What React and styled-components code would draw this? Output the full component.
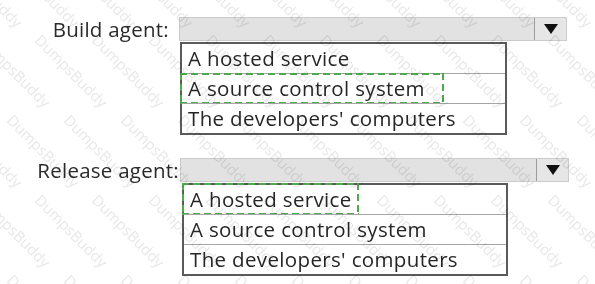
import * as React from 'react'
import styled, { createGlobalStyle } from 'styled-components'

const GlobalStyle = createGlobalStyle`
  html, body {
    margin: 0;
    padding: 0;
    background: #ffffff;
  }
  body {
    font-family: 'Open Sans', 'Noto Sans', sans-serif;
    color: #262626;
  }
`

const Page = styled.div`
  position: relative;
  width: 595px;
  height: 284px;
  overflow: hidden;
  background: #fff;
`

const Section = styled.div`
  display: flex;
  flex-direction: column;
  padding-top: ${p => p.top}px;
`

const Header = styled.div`
  display: flex;
  align-items: center;
  height: 24px;
`

const Label = styled.div`
  width: ${p => p.width}px;
  box-sizing: border-box;
  padding-right: ${p => p.gap}px;
  text-align: right;
  font-size: 20.5px;
  line-height: 24px;
  letter-spacing: 0.25px;
  color: #2a2a2a;
  white-space: nowrap;
`

const Bar = styled.div`
  display: flex;
  width: ${p => p.width}px;
  height: 24px;
  box-sizing: border-box;
  background: #e2e2e2;
  border: 1px solid #cbcbcb;
`

const BarFill = styled.div`
  flex: 1;
`

const ArrowButton = styled.div`
  width: 31px;
  display: flex;
  align-items: center;
  justify-content: center;
  border-left: 1px solid #9c9c9c;
  background: #e6e6e6;
`

const List = styled.div`
  display: flex;
  flex-direction: column;
  width: ${p => p.width}px;
  margin-left: ${p => p.left}px;
  margin-top: ${p => p.gap}px;
  box-sizing: border-box;
  border: 2px solid #5a5a5a;
  background: #fff;
`

const Option = styled.div`
  position: relative;
  height: 29px;
  display: flex;
  align-items: center;
  padding-left: 6px;
  font-size: 20.5px;
  line-height: 29px;
  letter-spacing: 0.35px;
  color: #262626;
  white-space: nowrap;
  & + & {
    border-top: 1px solid #a6a6a6;
  }
  ${p => p.mark && `
    &::after {
      content: '';
      position: absolute;
      left: -2px;
      top: ${p.first ? -2 : -1}px;
      bottom: -1px;
      width: ${p.mark}px;
      background:
        repeating-linear-gradient(90deg, #4daa4d 0 7px, transparent 7px 11px) top left / 100% 2px no-repeat,
        repeating-linear-gradient(90deg, #4daa4d 0 7px, transparent 7px 11px) bottom left / 100% 2px no-repeat,
        repeating-linear-gradient(180deg, #4daa4d 0 7px, transparent 7px 11px) top left / 2px 100% no-repeat,
        repeating-linear-gradient(180deg, #4daa4d 0 7px, transparent 7px 11px) top right / 2px 100% no-repeat;
    }
  `}
`

const Watermark = styled.div`
  position: absolute;
  inset: -50px -60px 0 -40px;
  display: grid;
  grid-template-columns: repeat(13, 57px);
  grid-auto-rows: 80px;
  pointer-events: none;
  mix-blend-mode: multiply;
`

const Mark = styled.span`
  display: block;
  transform: translateX(${p => (p.odd ? 28 : 0)}px) rotate(45deg);
  transform-origin: left top;
  font-family: 'Open Sans', sans-serif;
  font-size: 15px;
  color: #e8e8e8;
  white-space: nowrap;
`

const Arrow = () => (
  <svg width="16" height="12" viewBox="0 0 16 12">
    <polygon points="1,1 15,1 8,11" fill="#111" />
  </svg>
)

const options = ['A hosted service', 'A source control system', "The developers' computers"]

const Dropdown = ({ label, labelWidth, labelGap, top, barWidth, listLeft, listWidth, listGap, marked, markWidth }) => (
  <Section top={top}>
    <Header>
      <Label width={labelWidth} gap={labelGap}>{label}</Label>
      <Bar width={barWidth}>
        <BarFill />
        <ArrowButton><Arrow /></ArrowButton>
      </Bar>
    </Header>
    <List left={listLeft} width={listWidth} gap={listGap}>
      {options.map((o, i) => (
        <Option key={o} first={i === 0} mark={i === marked ? markWidth : 0}>{o}</Option>
      ))}
    </List>
  </Section>
)

export default function App() {
  const marks = []
  for (let r = 0; r < 5; r++) {
    for (let c = 0; c < 13; c++) {
      marks.push(<Mark key={r + '-' + c} odd={r % 2 === 1}>DumpsBuddy</Mark>)
    }
  }
  return (
    <Page>
      <GlobalStyle />
      <Dropdown
        label="Build agent:"
        labelWidth={179}
        labelGap={10}
        top={17}
        barWidth={388}
        listLeft={180}
        listWidth={327}
        listGap={1}
        marked={1}
        markWidth={264}
      />
      <Dropdown
        label="Release agent:"
        labelWidth={180}
        labelGap={1}
        top={23}
        barWidth={389}
        listLeft={182}
        listWidth={326}
        listGap={1}
        marked={0}
        markWidth={177}
      />
      <Watermark>{marks}</Watermark>
    </Page>
  )
}
